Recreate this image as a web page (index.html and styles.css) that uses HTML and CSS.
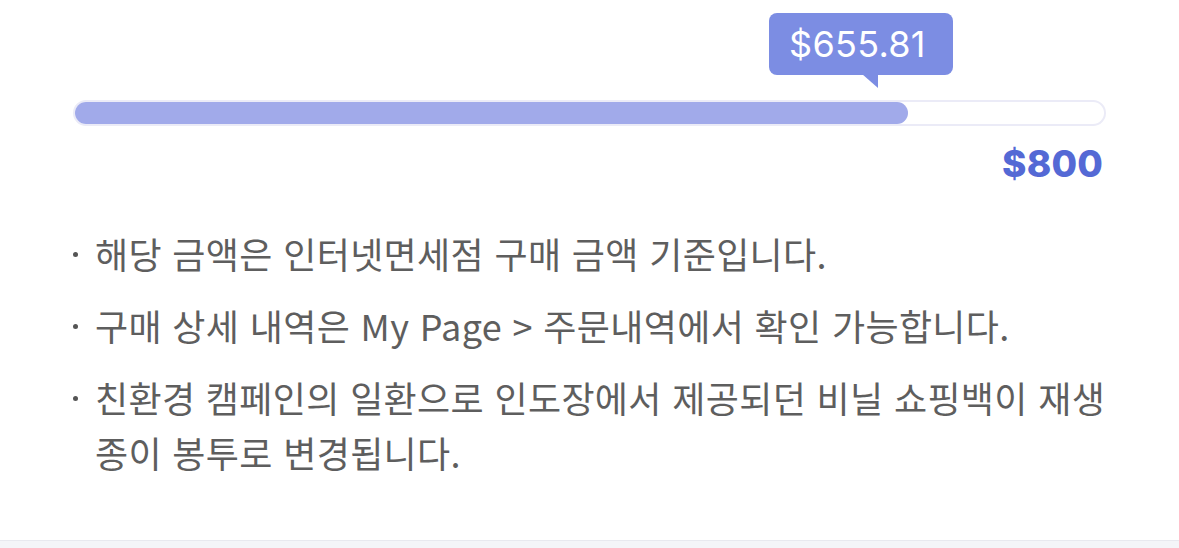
FILE: index.html
```html
<!DOCTYPE html>
<html lang="ko">
<head>
<meta charset="utf-8">
<link rel="stylesheet" href="styles.css">
</head>
<body>
<div class="page">
  <section class="progress">
    <div class="tooltip" style="left: 769px;">$655.81<span class="tail"></span></div>
    <div class="track"><div class="fill" style="width: 81%;"></div></div>
    <div class="limit">$800</div>
  </section>
  <ul class="notes">
    <li>해당 금액은 인터넷면세점 구매 금액 기준입니다.</li>
    <li>구매 상세 내역은 My Page &gt; 주문내역에서 확인 가능합니다.</li>
    <li>친환경 캠페인의 일환으로 인도장에서 제공되던 비닐 쇼핑백이 재생 종이 봉투로 변경됩니다.</li>
  </ul>
</div>
<div class="footer-band"></div>
</body>
</html>
```

FILE: styles.css
```css
html, body {
  margin: 0;
  padding: 0;
  background: #ffffff;
}
body {
  width: 1179px;
  height: 548px;
  overflow: hidden;
  display: flex;
  flex-direction: column;
  font-family: "Noto Sans CJK KR", "Noto Sans", sans-serif;
}
.page {
  flex: 1;
  padding: 0 70px 0 73px;
}
.progress {
  position: relative;
  padding-top: 100px;
  margin-right: 3px;
}
.tooltip {
  position: absolute;
  top: 13px;
  width: 184px;
  height: 62px;
  box-sizing: border-box;
  background: #7c8de3;
  border-radius: 8px;
  color: #ffffff;
  font-family: Inter, "Liberation Sans", sans-serif;
  font-size: 36px;
  line-height: 62px;
  padding-left: 20px;
  letter-spacing: 0.3px;
  transform: translateX(-73px);
}
.tail {
  position: absolute;
  left: 93px;
  top: 61px;
  width: 16px;
  height: 14px;
  background: #7c8de3;
  clip-path: polygon(0 0, 100% 0, 100% 100%);
}
.track {
  height: 26px;
  box-sizing: border-box;
  border: 2px solid #ebebf7;
  border-radius: 13px;
  background: #ffffff;
}
.fill {
  height: 100%;
  background: #a1aaea;
  border-radius: 11px;
}
.limit {
  text-align: right;
  font-family: Inter, "Liberation Sans", sans-serif;
  font-weight: 800;
  font-size: 37px;
  line-height: 40px;
  color: #5469d5;
  margin-top: 18px;
  padding-right: 3px;
  letter-spacing: 0.2px;
}
.notes {
  list-style: none;
  margin: 42px 0 0;
  padding: 0;
  display: flex;
  flex-direction: column;
  gap: 17px;
}
.notes li {
  position: relative;
  padding-left: 22px;
  font-size: 36px;
  line-height: 55px;
  color: #5e5e5e;
  letter-spacing: 0.35px;
  word-break: keep-all;
}
.notes li::before {
  content: "";
  position: absolute;
  left: 0;
  top: 26px;
  width: 5px;
  height: 5px;
  border-radius: 50%;
  background: #555555;
}
.footer-band {
  height: 7px;
  border-top: 1px solid #e8e9ef;
  background: #f4f5f8;
}
```
